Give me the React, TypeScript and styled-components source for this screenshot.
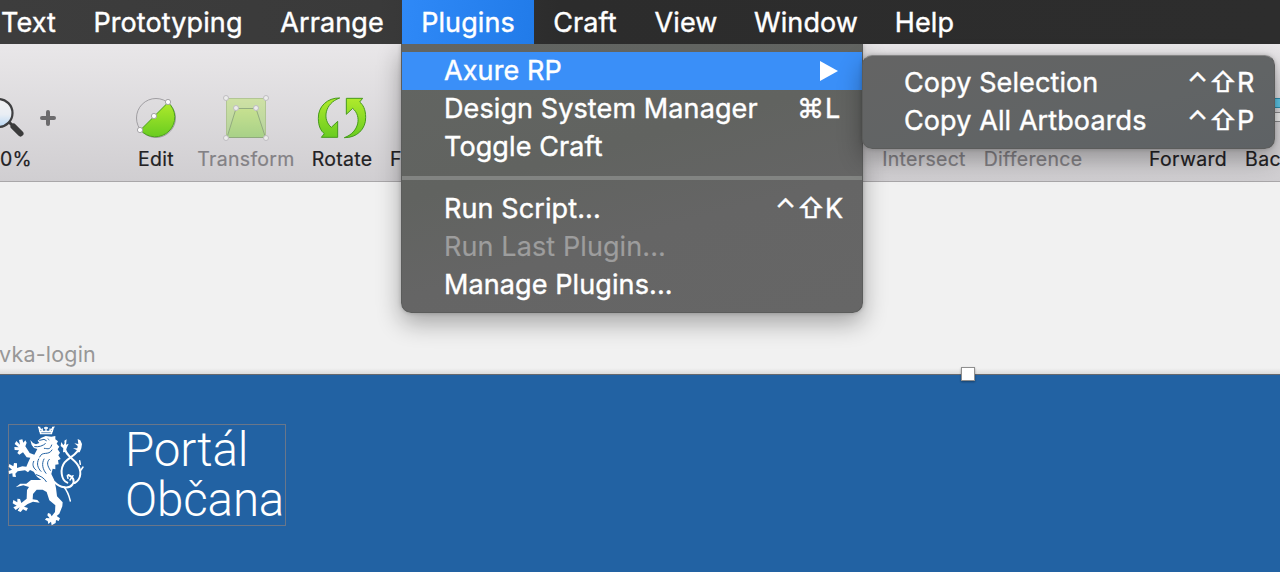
import React from "react";
import styled, { createGlobalStyle } from "styled-components";

const Global = createGlobalStyle`
  *, *::before, *::after { box-sizing: border-box; }
  body {
    margin: 0;
    overflow: hidden;
    font-family: Inter, "Liberation Sans", sans-serif;
  }
`;

const Screen = styled.div`
  position: relative;
  width: 1280px;
  height: 572px;
  overflow: hidden;
  display: flex;
  flex-direction: column;
  background: #f1f1f1;
`;

const MenuBar = styled.nav`
  position: relative;
  z-index: 3;
  flex: none;
  height: 44px;
  display: flex;
  background: linear-gradient(90deg, #3d3d3d 0, #3a3a3a 380px, #2c2c2c 560px, #2d2d2d 100%);
`;

const MenuBarItem = styled.div<{ $width: number; $active?: boolean }>`
  flex: none;
  width: ${(p) => p.$width}px;
  padding-top: 1px;
  display: flex;
  align-items: center;
  justify-content: center;
  white-space: nowrap;
  font-size: 27px;
  letter-spacing: 0.1px;
  line-height: 43px;
  -webkit-text-stroke: 0.4px #fff;
  color: #fff;
  background: ${(p) => (p.$active ? "linear-gradient(100deg, #2f89f7, #217be9)" : "none")};
  &:first-child { margin-left: -17px; }
`;

const Toolbar = styled.header`
  flex: none;
  height: 138px;
  padding-top: 50px;
  display: flex;
  align-items: flex-start;
  background: linear-gradient(#e9e7e9, #d0ced1);
  border-bottom: 1px solid #a9a7a9;
`;

const Tool = styled.div<{ $width: number; $dim?: boolean }>`
  flex: none;
  width: ${(p) => p.$width}px;
  display: flex;
  flex-direction: column;
  align-items: center;
  color: ${(p) => (p.$dim ? "#838185" : "#222123")};
`;

const EdgeTool = styled(Tool)`
  align-items: flex-start;
  overflow: hidden;
`;

const ToolIcon = styled.svg`
  display: block;
  flex: none;
  height: 48px;
  overflow: visible;
`;

const ToolLabel = styled.span`
  margin-top: 5px;
  line-height: 24px;
  font-size: 19.5px;
  letter-spacing: 0.3px;
  -webkit-text-stroke: 0.2px currentColor;
  white-space: nowrap;
`;

const Gap = styled.div<{ $width: number }>`
  flex: none;
  width: ${(p) => p.$width}px;
`;

const Canvas = styled.main`
  flex: 1;
  display: flex;
  flex-direction: column;
`;

const ArtboardName = styled.div`
  height: 192px;
  padding-top: 157px;
  margin-left: -1px;
  line-height: 30px;
  font-size: 21.5px;
  letter-spacing: 0.2px;
  color: #979797;
  background: linear-gradient(#f1f1f1 186px, #dcdcdc 192px);
`;

const Artboard = styled.section`
  position: relative;
  flex: 1;
  padding: 49px 0 0 8px;
  border-top: 1px solid #67696d;
  background: #2262a3;
`;

const Handle = styled.i`
  position: absolute;
  left: 961px;
  top: -8px;
  width: 14px;
  height: 14px;
  border: 1px solid #8f8f8f;
  background: #fff;
  box-shadow: 0 1px 2px rgba(0, 0, 0, 0.35);
`;

const Brand = styled.div`
  display: flex;
  width: 278px;
  height: 102px;
  border: 1px solid #69768a;
`;

const Lion = styled.svg`
  flex: none;
  width: 80px;
  height: 102px;
  margin: -1px 0 0 -1px;
`;

const BrandName = styled.div`
  margin: 0 0 0 37px;
  font-family: Roboto, sans-serif;
  font-weight: 300;
  font-size: 47.5px;
  letter-spacing: -0.15px;
  line-height: 50px;
  color: #fff;
  white-space: nowrap;
`;

const Menu = styled.div`
  position: absolute;
  z-index: 2;
  left: 401px;
  top: 44px;
  width: 462px;
  height: 269px;
  padding: 8px 0 0;
  border: 1px solid #5b5c5b;
  border-top: 0;
  border-radius: 0 0 10px 10px;
  background: linear-gradient(165deg, #626562 0%, #616360 40%, #656565 65%, #666 100%);
  box-shadow: 0 10px 24px rgba(0, 0, 0, 0.32), 0 0 4px rgba(0, 0, 0, 0.2);
`;

const Submenu = styled(Menu)`
  z-index: 4;
  left: 862px;
  top: 55px;
  width: 413px;
  height: 94px;
  border-top: 1px solid #858585;
  border-radius: 10px;
  background: linear-gradient(165deg, #646464, #616465 60%, #5e6265);
`;

const MenuRow = styled.div<{ $active?: boolean; $disabled?: boolean; $inset?: number }>`
  height: 38px;
  padding: 0 18px 0 ${(p) => p.$inset ?? 42}px;
  display: flex;
  align-items: center;
  justify-content: space-between;
  white-space: nowrap;
  font-size: 27px;
  letter-spacing: 0.1px;
  line-height: 36px;
  -webkit-text-stroke: ${(p) => (p.$disabled ? "0.2px" : "0.4px")} currentColor;
  color: ${(p) => (p.$disabled ? "#9d9d9d" : "#fff")};
  background: ${(p) => (p.$active ? "#3a8ff8" : "none")};
`;

const Separator = styled.hr`
  height: 4px;
  margin: 10px 0 10px;
  border: 0;
  background: #828482;
`;

const Shortcut = styled.span`
  display: flex;
`;

const Key = styled.span<{ $width: number }>`
  width: ${(p) => p.$width}px;
`;

const Arrow = styled.svg`
  width: 18px;
  height: 20px;
  margin: -1px 6px 0 0;
`;

function Keys({ keys }: { keys: string }) {
  return (
    <Shortcut>
      {[...keys].map((k) => (
        <Key key={k} $width={k === "⌃" ? 22 : k === "⇧" || k === "⌘" ? 28 : 19}>{k}</Key>
      ))}
    </Shortcut>
  );
}

const Defs = () => (
  <defs>
    <linearGradient id="green" x1="0" y1="0" x2="0" y2="1">
      <stop offset="0" stopColor="#b0ea2c" />
      <stop offset="1" stopColor="#69cc20" />
    </linearGradient>
  </defs>
);

function ZoomIcon() {
  return (
    <ToolIcon width="80" viewBox="0 94 80 48">
      <defs>
        <linearGradient id="lens" x1="0" y1="0" x2="0" y2="1">
          <stop offset="0" stopColor="#f2f2f4" />
          <stop offset=".55" stopColor="#e9eef4" />
          <stop offset="1" stopColor="#b9d8f5" />
        </linearGradient>
      </defs>
      <path d="M9 122 L13 126" stroke="#3b3b3b" strokeWidth="3" />
      <path d="M13.500 126.500 L20.500 133.500" stroke="#3b3b3b" strokeWidth="6" strokeLinecap="round" />
      <circle cx="-1.5" cy="113" r="14" fill="url(#lens)" stroke="#3f3f41" strokeWidth="2.200" />
      <path d="M42 118H54M48 112V124" stroke="#6c6b6d" strokeWidth="4" strokeLinecap="round" />
    </ToolIcon>
  );
}

function EditIcon() {
  return (
    <ToolIcon width="48" viewBox="132 94 48 48">
      <Defs />
      <circle cx="156" cy="118" r="19.5" fill="none" stroke="#a09ea2" />
      <path d="M168 102.5 A19.5 19.5 0 1 1 140.500 130 Z" fill="url(#green)" stroke="#4ba21a" />
      <g fill="#fff" stroke="#a5a3a7">
        <circle cx="168" cy="102" r="2.600" />
        <circle cx="154" cy="116" r="2.600" />
        <circle cx="140" cy="130" r="2.600" />
      </g>
    </ToolIcon>
  );
}

function TransformIcon() {
  return (
    <ToolIcon width="48" viewBox="222 94 48 48">
      <g opacity=".5">
        <rect x="226.500" y="98.500" width="39" height="39" fill="url(#green)" fillOpacity=".65" stroke="#86b14b" />
        <path d="M227 137.500 L236 108.500 H256 L265.500 137.500 Z" fill="url(#green)" fillOpacity=".6" stroke="#4b7f26" />
      </g>
      <g fill="#ececec" stroke="#bfbdc1">
        {[[226, 98], [266, 98], [226, 138], [266, 138], [236, 108], [256, 108]].map(([x, y]) => (
          <circle key={`${x}-${y}`} cx={x} cy={y} r="2.500" />
        ))}
      </g>
    </ToolIcon>
  );
}

function RotateIcon() {
  const d = "M659 39 C622 38 594 65 595 100 C595 124 603 138 613 146 L604 157 H653 V109 L634 127 C606 104 614 55 659 39 Z";
  return (
    <ToolIcon width="50" viewBox="591 27 150 144">
      <path d={d} fill="url(#green)" stroke="#459a1b" strokeWidth="3" />
      <path
        d="M673 158 C710 159 738 132 737 97 C737 73 729 59 719 51 L728 40 H679 V88 L698 70 C726 93 718 142 673 158 Z"
        fill="url(#green)"
        stroke="#459a1b"
        strokeWidth="3"
      />
    </ToolIcon>
  );
}

function LayerIcon() {
  return (
    <ToolIcon width="48" viewBox="0 0 48 48">
      <rect x="6.500" y="4.500" width="35" height="9" fill="#5ec9ea" stroke="#2c8fb0" />
      <rect x="6.500" y="18.500" width="35" height="9" fill="#f1f1f1" stroke="#8c8c8e" />
    </ToolIcon>
  );
}

function CzechLion() {
  return (
    <Lion viewBox="24 282 240 306">
      <g fill="#fff">
        <path d="M120 313 L118 302 H158 L156 313 Z" />
        <path d="M123 324 L137 318 L154 320 L166 318 L166 328 L174 334 L170 341 L178 350 L173 358 L180 368 L175 376 L182 387 L174 391 L176 403 L166 404 L166 418 L158 416 L154 432 L163 451 L168 474 L171 499 L188 517 L187 529 L178 551 L170 558 L180 565 L176 573 L168 570 L167 579 L155 586 L153 575 L145 582 L143 573 L135 569 L139 564 L149 565 L142 556 L144 549 L151 551 L155 559 L165 546 L166 526 L148 511 L140 486 L128 479 L110 479 L99 492 L98 508 L112 510 L119 518 L99 515 L83 522 L72 530 L84 534 L79 543 L69 538 L62 546 L53 542 L59 532 L47 540 L40 532 L50 527 L38 520 L40 510 L52 517 L52 506 L60 507 L64 519 L80 506 L81 480 L87 471 L70 466 L47 472 L61 461 L79 461 L93 450 L124 450 L111 440 L101 425 L90 420 L84 427 L75 421 L53 424 L46 431 L48 441 L38 440 L37 430 L27 432 L26 423 L36 419 L26 410 L28 402 L40 409 L42 399 L51 400 L51 414 L67 409 L79 410 L84 398 L91 383 L80 382 L69 367 L58 374 L52 369 L57 361 L44 360 L43 351 L56 352 L44 342 L49 333 L60 344 L57 330 L67 328 L70 338 L76 331 L80 338 L76 349 L89 369 L103 374 L112 357 L102 354 L95 345 L91 330 L99 339 L108 343 L118 339 L113 332 Z" />
      </g>
      <g fill="none" stroke="#fff" strokeWidth="4">
        <path d="M120 306 L117 293 L128 302 M156 306 L160 293 L149 302 M114 292H121M156 292H163M138 304V290M132 294H144" />
        <path d="M127 303V295M150 303V295" strokeWidth="3" />
      </g>
      <g fill="none" stroke="#2262a3" strokeWidth="3" strokeLinecap="round">
        <path d="M119 331 L132 328 L139 332 M104 350 C117 352 129 347 136 341 M133 355 C145 356 150 360 155 345 M156 360 C145 379 127 361 119 381 M101 394 C97 402 98 413 108 420 M116 387 C109 401 113 414 123 424 M132 387 C124 401 128 418 138 430 M148 388 C139 397 142 407 151 421 M109 434 C121 438 132 443 139 455" />
        <path d="M125 308 L151 308 M144 326 L147 330" strokeWidth="2" />
      </g>
      <g fill="none" stroke="#fff" strokeWidth="6" strokeLinecap="round">
        <path d="M163 456 C181 474 207 478 217 464 C226 450 218 440 205 435" />
        <path d="M202 458 C183 451 179 416 194 397 C211 379 233 374 239 350" />
        <path d="M193 350 C195 376 218 384 230 400 C246 420 245 448 224 459" />
        <path d="M241 403 L239 392 M243 420 L249 411 M204 445 L202 437 M210 450 L219 437 M192 471 C204 485 208 500 211 513" strokeWidth="4.500" />
      </g>
      <g fill="#fff">
        <path d="M189 367 L190 355 L182 348 L184 336 L190 346 L194 340 L193 332 L200 328 L198 344 L206 341 L201 352 L196 366 Z" />
        <path d="M233 367 L231 361 L219 355 L232 355 L233 348 L223 340 L235 342 L233 327 L241 331 L246 342 L244 355 L239 367 Z" />
      </g>
    </Lion>
  );
}

export default function App() {
  return (
    <Screen>
      <Global />
      <MenuBar>
        <MenuBarItem $width={91}>Text</MenuBarItem>
        <MenuBarItem $width={188}>Prototyping</MenuBarItem>
        <MenuBarItem $width={140}>Arrange</MenuBarItem>
        <MenuBarItem $width={132} $active>Plugins</MenuBarItem>
        <MenuBarItem $width={102}>Craft</MenuBarItem>
        <MenuBarItem $width={100}>View</MenuBarItem>
        <MenuBarItem $width={140}>Window</MenuBarItem>
        <MenuBarItem $width={97}>Help</MenuBarItem>
      </MenuBar>
      <Toolbar>
        <EdgeTool $width={120}><ZoomIcon /><ToolLabel>0%</ToolLabel></EdgeTool>
        <Tool $width={72}><EditIcon /><ToolLabel>Edit</ToolLabel></Tool>
        <Tool $width={108} $dim><TransformIcon /><ToolLabel>Transform</ToolLabel></Tool>
        <Tool $width={84}><RotateIcon /><ToolLabel>Rotate</ToolLabel></Tool>
        <Gap $width={6} />
        <EdgeTool $width={70}><ToolIcon width="48" /><ToolLabel>F</ToolLabel></EdgeTool>
        <Gap $width={413} />
        <Tool $width={102} $dim><ToolIcon width="48" /><ToolLabel>Intersect</ToolLabel></Tool>
        <Tool $width={116} $dim><ToolIcon width="48" /><ToolLabel>Difference</ToolLabel></Tool>
        <Gap $width={47} />
        <Tool $width={100}><ToolIcon width="48" /><ToolLabel>Forward</ToolLabel></Tool>
        <Tool $width={108}><LayerIcon /><ToolLabel>Backward</ToolLabel></Tool>
      </Toolbar>
      <Canvas>
        <ArtboardName>vka-login</ArtboardName>
        <Artboard>
          <Handle />
          <Brand>
            <CzechLion />
            <BrandName>Portál<br />Občana</BrandName>
          </Brand>
        </Artboard>
      </Canvas>
      <Menu>
        <MenuRow $active>
          Axure RP
          <Arrow viewBox="0 0 18 20"><path d="M0 0L18 10L0 20Z" fill="#fff" /></Arrow>
        </MenuRow>
        <MenuRow>Design System Manager<Keys keys="⌘L" /></MenuRow>
        <MenuRow>Toggle Craft</MenuRow>
        <Separator />
        <MenuRow>Run Script...<Keys keys="⌃⇧K" /></MenuRow>
        <MenuRow $disabled>Run Last Plugin...</MenuRow>
        <MenuRow>Manage Plugins...</MenuRow>
      </Menu>
      <Submenu>
        <MenuRow $inset={41}>Copy Selection<Keys keys="⌃⇧R" /></MenuRow>
        <MenuRow $inset={41}>Copy All Artboards<Keys keys="⌃⇧P" /></MenuRow>
      </Submenu>
    </Screen>
  );
}
